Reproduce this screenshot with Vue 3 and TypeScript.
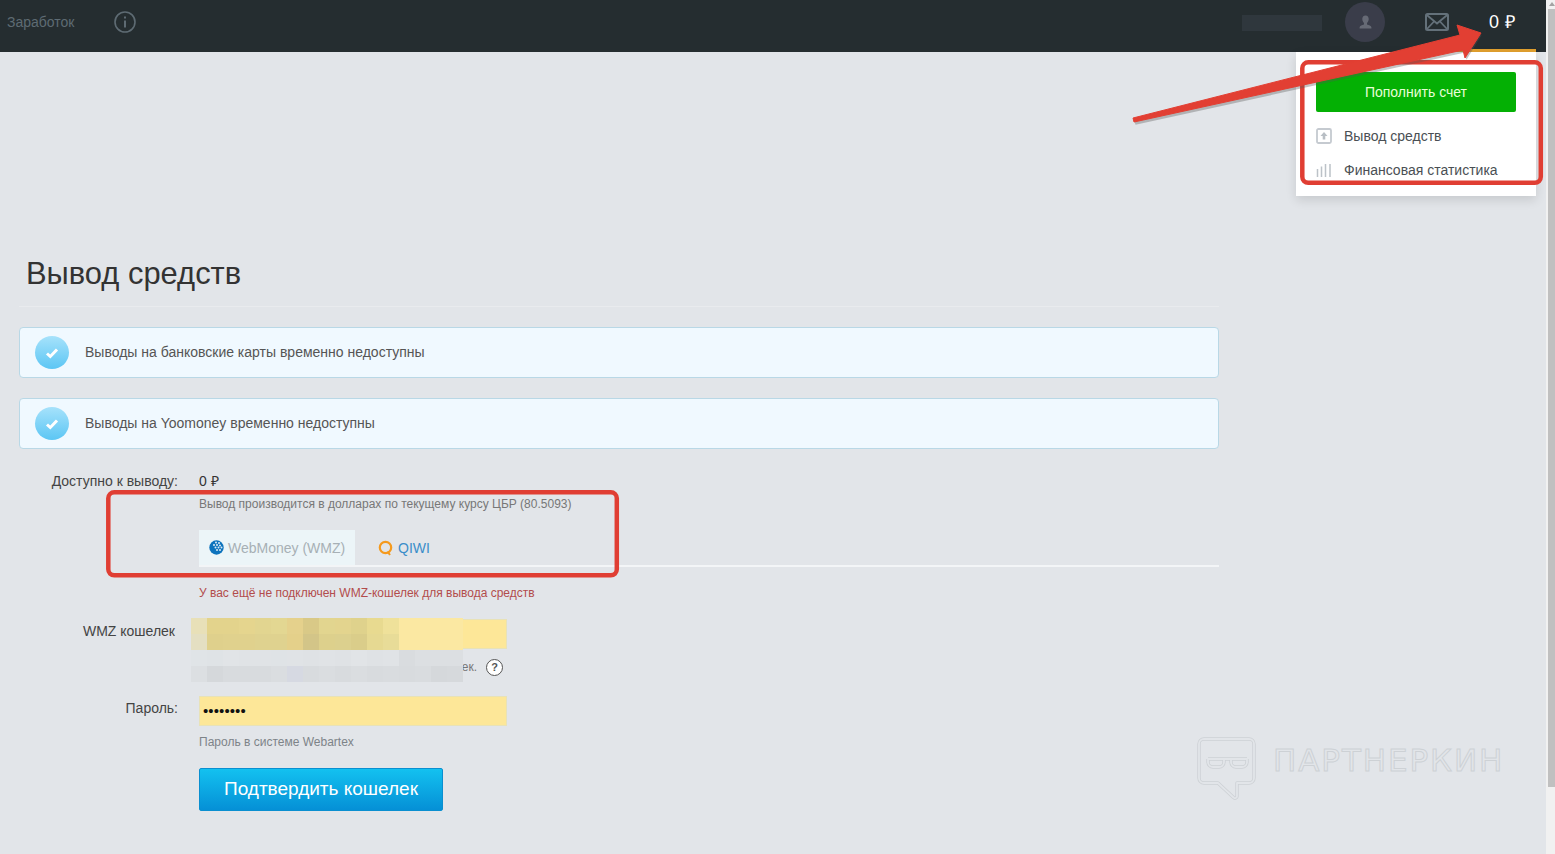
<script setup lang="ts">
const rows: string[][] = [
  ['#e8e0b8', '#e3d38c', '#e3d38c', '#e5d58e', '#e2d590', '#e3d792', '#e5d18c', '#d9c987', '#e2d58f', '#e3d48e', '#dfd28c', '#e8da90', '#efe19a', '#fbe8a2', '#fbe8a2', '#fbe8a2', '#fbe8a2'],
  ['#e4dfc2', '#dfd08c', '#e0d18d', '#e0d18d', '#dfd28f', '#dfd28f', '#e4d08a', '#d3c588', '#ddd08c', '#dcd08e', '#dacd8a', '#e6d992', '#e8dc98', '#fbe8a2', '#fbe8a2', '#fbe8a2', '#fbe8a2'],
  ['#e0e4e7', '#dfe3e6', '#e1e4e7', '#e0e3e6', '#e0e3e6', '#dfe3e6', '#e0e3e6', '#dfe2e5', '#e0e3e6', '#dfe2e5', '#e1e4e7', '#dfe2e5', '#e0e3e6', '#d9dcdf', '#dcdfe2', '#dcdfe2', '#dcdfe2'],
  ['#dcdfe2', '#d5d8db', '#d8dbde', '#d8dbde', '#d8dbde', '#dadde0', '#d6d9e2', '#d8dbde', '#dadde0', '#d8dbde', '#dadde0', '#d8dbde', '#d9dcdf', '#d8dbde', '#d9dcdf', '#d5d8db', '#d6d9dc'],
]
</script>

<template>
  <div class="page">
    <div class="main">
      <header class="topbar">
        <div class="top-left">
          <span class="earn">Заработок</span>
          <svg class="info" width="22" height="22" viewBox="0 0 22 22">
            <circle cx="11" cy="11" r="10" fill="none" stroke="#5e6b73" stroke-width="1.6" />
            <rect x="10" y="9.5" width="2" height="7" fill="#5e6b73" />
            <rect x="10" y="5.5" width="2" height="2" fill="#5e6b73" />
          </svg>
        </div>
        <div class="top-right">
          <div class="name-blur"></div>
          <div class="avatar">
            <svg width="15" height="15" viewBox="0 0 14 14">
              <path d="M7 0.5c2 0 3 1.500 3 3.300 0 1.600-.8 3-1.600 3.700v1.300c1.800.6 3.900 1.100 4.100 2.700v1H1.500v-1c.2-1.600 2.300-2.100 4.100-2.700V7.500C4.800 6.800 4 5.400 4 3.800 4 2 5 .5 7 .5z" fill="#666a75" />
            </svg>
          </div>
          <svg class="mail" width="24" height="18" viewBox="0 0 24 18">
            <rect x="1" y="1" width="22" height="16" rx="1.500" fill="none" stroke="#64717a" stroke-width="2" />
            <path d="M1.500 1.800 12 10.500 22.500 1.800M1.500 16.500 9 8.500M22.500 16.500 15 8.500" fill="none" stroke="#64717a" stroke-width="1.800" />
          </svg>
          <div class="balance">0 ₽</div>
        </div>
      </header>

      <div class="content">
        <div class="dropdown-anchor">
          <div class="dropdown">
            <button class="refill">Пополнить счет</button>
            <div class="menu-item">
              <svg width="16" height="16" viewBox="0 0 16 16">
                <rect x="1" y="1" width="14" height="14" rx="1.500" fill="none" stroke="#c5cad0" stroke-width="1.800" />
                <path d="M8 4 11.500 8H9.300v3.500H6.700V8H4.500z" fill="#b8bec4" />
              </svg>
              <span>Вывод средств</span>
            </div>
            <div class="menu-item">
              <svg width="16" height="16" viewBox="0 0 16 16">
                <path d="M1.500 15V7M5.500 15V4.500M9.500 15V2M14 15V2" stroke="#bcc2c8" stroke-width="1.500" fill="none" />
              </svg>
              <span>Финансовая статистика</span>
            </div>
          </div>
        </div>

        <h1 class="title">Вывод средств</h1>

        <div class="notice">
          <span class="check">
            <svg width="14" height="12" viewBox="0 0 14 12"><path d="M2 6.500 5.300 9.500 12 2.500" fill="none" stroke="#fff" stroke-width="3" /></svg>
          </span>
          <span class="notice-text">Выводы на банковские карты временно недоступны</span>
        </div>
        <div class="notice">
          <span class="check">
            <svg width="14" height="12" viewBox="0 0 14 12"><path d="M2 6.500 5.300 9.500 12 2.500" fill="none" stroke="#fff" stroke-width="3" /></svg>
          </span>
          <span class="notice-text">Выводы на Yoomoney временно недоступны</span>
        </div>

        <div class="form">
          <div class="avail">
            <span class="label">Доступно к выводу:</span>
            <span class="value">0 ₽</span>
          </div>
          <div class="rate">Вывод производится в долларах по текущему курсу ЦБР (80.5093)</div>
          <div class="tabs">
            <div class="tab active">
              <svg width="15" height="15" viewBox="0 0 15 15">
                <circle cx="7.500" cy="7.500" r="7.200" fill="#0d73bd" />
                <g fill="#dbeaf5">
                  <circle cx="7" cy="2.500" r="1" /><circle cx="10" cy="3" r="1" /><circle cx="5" cy="5" r="1" />
                  <circle cx="8" cy="5" r="1" /><circle cx="11" cy="5.500" r="1" /><circle cx="6.500" cy="7.500" r="1" />
                  <circle cx="9.500" cy="7.500" r="1" /><circle cx="12.500" cy="7.500" r="1" /><circle cx="8" cy="10" r="1" />
                  <circle cx="11" cy="10" r="1" />
                </g>
              </svg>
              <span>WebMoney (WMZ)</span>
            </div>
            <div class="tab qiwi">
              <svg width="15" height="16" viewBox="0 0 15 16">
                <circle cx="7.500" cy="7.500" r="5.700" fill="none" stroke="#f59a1e" stroke-width="2.200" />
                <path d="M9.500 11.500 12 15" stroke="#f59a1e" stroke-width="2" fill="none" />
              </svg>
              <span>QIWI</span>
            </div>
          </div>
          <div class="warn">У вас ещё не подключен WMZ-кошелек для вывода средств</div>

          <div class="wallet">
            <span class="label wallet-label">WMZ кошелек</span>
            <div class="field-col">
              <div class="input wallet-input"></div>
              <div class="wallet-hint">
                <span class="hint-tail">ек.</span>
                <span class="help">?</span>
              </div>
            </div>
            <div class="mosaic">
              <template v-for="(row, r) in rows" :key="r">
                <span v-for="(c, i) in row" :key="i" :style="{ background: c }"></span>
              </template>
            </div>
          </div>

          <div class="pass">
            <span class="label">Пароль:</span>
            <div class="input pass-input">••••••••</div>
          </div>
          <div class="pass-hint">Пароль в системе Webartex</div>
          <button class="confirm">Подтвердить кошелек</button>
        </div>
      </div>

      <!-- annotation layer over the screenshot -->
      <svg class="annot" width="1555" height="854" viewBox="0 0 1555 854">
        <rect x="1302.300" y="62.300" width="238.500" height="120.500" rx="6" fill="none" stroke="#e03e33" stroke-width="4.500" />
        <rect x="108.300" y="492.300" width="508.500" height="83" rx="6" fill="none" stroke="#e03e33" stroke-width="4.500" />
        <path d="M1134 119.500 1461 36 1458 26 1481 33.500 1466 58 1463.500 51 1135 123Z" fill="#555" opacity=".35" transform="translate(0.500 1.800)" />
        <path d="M1133 118 1460 35 1457 25 1481 33 1465 58 1463 50 1134 122Z" fill="#e23f33" stroke="#e23f33" stroke-width="1" stroke-linejoin="round" />
      </svg>

      <div class="wm">
        <svg width="62" height="68" viewBox="0 0 62 68">
          <g fill="none" stroke-linejoin="round">
            <path class="wm-outer" d="M8 4H53a5 5 0 0 1 5 5V43a5 5 0 0 1-5 5H41V61a2 2 0 0 1-3.500 1.500L22 48H8a5 5 0 0 1-5-5V9a5 5 0 0 1 5-5z" />
            <path class="wm-outer" d="M12 24H51M12 24v3a5 5 0 0 0 5 5h6a5 5 0 0 0 5-5v-3M35 24v3a5 5 0 0 0 5 5h6a5 5 0 0 0 5-5v-3" />
            <path class="wm-inner" d="M8 4H53a5 5 0 0 1 5 5V43a5 5 0 0 1-5 5H41V61a2 2 0 0 1-3.500 1.500L22 48H8a5 5 0 0 1-5-5V9a5 5 0 0 1 5-5z" />
            <path class="wm-inner" d="M12 24H51M12 24v3a5 5 0 0 0 5 5h6a5 5 0 0 0 5-5v-3M35 24v3a5 5 0 0 0 5 5h6a5 5 0 0 0 5-5v-3" />
          </g>
        </svg>
        <span class="wm-text">ПАРТНЕРКИН</span>
      </div>
    </div>
    <div class="scrollbar">
      <div class="scroll-up"></div>
      <div class="thumb"></div>
    </div>
  </div>
</template>

<style>
html, body { margin: 0; overflow: hidden; }
</style>

<style scoped>
.page {
  display: flex;
  width: 1555px;
  height: 854px;
  overflow: hidden;
  font-family: "Liberation Sans", Arial, sans-serif;
  background: #e2e5e9;
}
.main { position: relative; width: 1546px; flex: none; }
.scrollbar { width: 9px; flex: none; background: #f1f1f1; }
.scroll-up {
  width: 0; height: 0; margin: 2px 0 3px 3px;
  border-left: 3px solid transparent; border-right: 3px solid transparent;
  border-bottom: 4px solid #a3a3a3;
}
.thumb { margin-left: 2px; height: 778px; background: #c0c0c0; }
.topbar {
  height: 52px;
  background: #252d30;
  display: flex;
  justify-content: space-between;
}
.top-left { display: flex; align-items: center; padding-left: 7px; height: 44px; }
.earn { font-size: 14px; color: #5e6b73; width: 107px; }
.top-right { display: flex; align-items: flex-start; padding-right: 10px; }
.name-blur { width: 80px; height: 16px; margin-top: 15px; background: #2f373d; margin-right: 23px; }
.avatar {
  width: 40px; height: 40px; border-radius: 50%; background: #3a3d4a;
  margin-top: 2px; margin-right: 40px;
  display: flex; align-items: center; justify-content: center;
}
.mail { margin-top: 13px; }
.balance {
  width: 89px; height: 49px; margin-left: -2px; box-sizing: border-box;
  color: #fff; font-size: 18px; line-height: 44px; text-align: right; padding-right: 20px;
  letter-spacing: .7px;
  position: relative;
}
.balance::after { content: ""; position: absolute; left: 0; right: 0; top: 49px; height: 3px; background: #e2a02e; }
.content { padding: 0 0 0 19px; position: relative; }
.dropdown-anchor { position: absolute; right: 10px; top: 0; }
.dropdown {
  width: 240px; height: 144px; box-sizing: border-box; background: #fff;
  padding: 20px 20px 0; box-shadow: 0 4px 10px rgba(0, 0, 0, .12);
}
.refill {
  display: block; width: 200px; height: 40px; border: 0; border-radius: 2px; padding: 0;
  background: #04b004; color: #e8ffd8; font: 14px "Liberation Sans", Arial, sans-serif;
}
.menu-item {
  display: flex; align-items: center; gap: 12px; height: 34px;
  font-size: 14px; color: #4a4f54;
}
.menu-item:first-of-type { margin-top: 7px; }
.title {
  margin: 0; padding: 202px 0 12px 7px; width: 1193px;
  font-size: 30.900px; line-height: 40px; font-weight: 400; color: #333;
  border-bottom: 1px solid #e9ebee;
}
.notice {
  width: 1200px; height: 51px; box-sizing: border-box; margin-top: 20px;
  background: #f0f9ff; border: 1px solid #b9d8e6; border-radius: 4px;
  display: flex; align-items: center; gap: 16px; padding-left: 15px;
  font-size: 14px; color: #555;
}
.notice-text { margin-bottom: 2px; }
.check {
  width: 34px; height: 33px; border-radius: 50%;
  background: linear-gradient(#a6e2fb, #5cc6f4);
  display: flex; align-items: center; justify-content: center;
}
.form { font-size: 14px; color: #444; }
.label { display: inline-block; width: 159px; text-align: right; color: #444; }
.avail { margin-top: 23px; line-height: 18px; display: flex; }
.value { margin-left: 21px; color: #333; }
.rate { margin: 6px 0 0 180px; font-size: 12px; line-height: 16px; color: #777; }
.tabs {
  margin: 18px 0 0 180px; width: 1020px; height: 35px;
  display: flex; border-bottom: 2px solid #f3f5f7;
}
.tab { height: 35px; display: flex; align-items: center; gap: 4px; padding: 0 10px; font-size: 14px; white-space: nowrap; }
.tab.active { background: #ecf5f8; color: #a7b0b5; width: 156px; box-sizing: border-box; padding-right: 0; }
.tab.qiwi { color: #3a8ec9; margin-left: 13px; gap: 5px; }
.warn { margin: 18px 0 0 180px; font-size: 12px; line-height: 16px; color: #b24c4c; }
.wallet { position: relative; display: flex; margin-top: 17px; height: 78px; }
.wallet-label { width: 156px; line-height: 24px; padding-top: 1px; }
.field-col { margin-left: 24px; width: 308px; }
.input {
  box-sizing: border-box; width: 308px; background: #fde798; border: 1px solid #e8e2b8;
}
.wallet-input { height: 30px; margin-top: 1px; }
.wallet-hint { display: flex; justify-content: flex-end; align-items: center; height: 36px; padding-right: 4px; }
.hint-tail { font-size: 12px; color: #777; margin-right: 9px; }
.help {
  width: 15px; height: 15px; border: 1.500px solid #555; border-radius: 50%;
  display: flex; align-items: center; justify-content: center;
  font-size: 11px; font-weight: 700; color: #555; background: #fff;
}
.mosaic {
  position: absolute; left: 172px; top: 0; width: 271px; height: 64px;
  display: grid; grid-template-columns: repeat(17, 16px); grid-template-rows: repeat(4, 16px);
}
.pass { display: flex; }
.pass .label { line-height: 24px; }
.pass-input {
  margin-left: 21px; height: 30px; line-height: 28px; padding-left: 3px;
  font-size: 15px; letter-spacing: .1px; color: #111;
}
.pass-hint { margin: 8px 0 0 180px; font-size: 12px; line-height: 16px; color: #7d8388; }
.confirm {
  display: block; margin: 18px 0 0 180px; width: 244px; height: 43px; padding: 0 0 2px;
  border: 1px solid #0a8fd0; border-radius: 2px;
  background: linear-gradient(#13c1f0, #0590d6); color: #fff;
  font: 19px "Liberation Sans", Arial, sans-serif;
}
.annot { position: absolute; left: 0; top: 0; pointer-events: none; }
.wm { position: absolute; left: 1196px; top: 735px; display: flex; gap: 15px; align-items: flex-start; }
.wm-outer { stroke: #cdd1d5; stroke-width: 3.400; }
.wm-inner { stroke: #e2e5e9; stroke-width: 1.800; }
.wm-text {
  margin-top: 7px; font-family: "DejaVu Sans", sans-serif; font-size: 31px; line-height: 36px; color: transparent;
  letter-spacing: 1.900px;
  -webkit-text-stroke: 1px #cdd1d5; white-space: nowrap;
}
</style>
